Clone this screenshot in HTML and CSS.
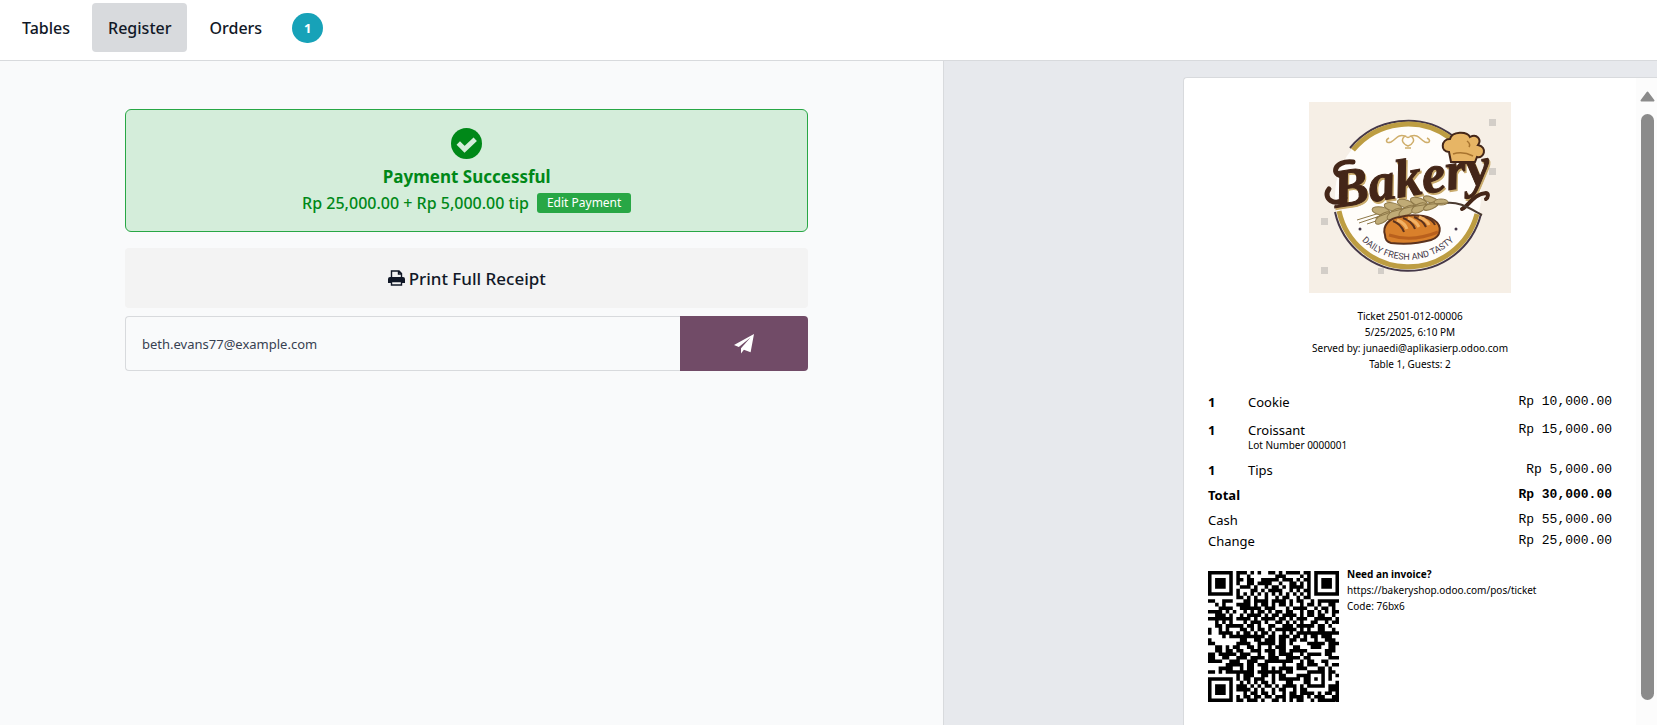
FILE: index.html
```
<!DOCTYPE html>
<html lang="en">
<head>
  <meta charset="UTF-8">
  <meta name="viewport" content="width=device-width, initial-scale=1.0">
  <title>Payment Successful</title>
  <link rel="stylesheet" href="styles.css">
</head>
<body>
  <header class="topbar">
    <nav class="tabs">
      <button type="button" class="tab">Tables</button>
      <button type="button" class="tab active">Register</button>
      <button type="button" class="tab">Orders</button>
    </nav>
    <span class="badge">1</span>
  </header>

  <main class="screen">
    <section class="actions">
      <div class="success">
        <svg class="check" viewBox="0 0 32 32" aria-hidden="true">
          <circle cx="16" cy="16" r="16" fill="#008818"/>
          <path d="M7.500 15.500 L14 22 L25 11.500" fill="none" stroke="#d4edda" stroke-width="5"/>
        </svg>
        <h1>Payment Successful</h1>
        <div class="amount">
          <span>Rp 25,000.00 + Rp 5,000.00 tip</span>
          <button type="button" class="edit">Edit Payment</button>
        </div>
      </div>

      <button type="button" class="print">
        <svg class="printer" viewBox="0 0 17 16" aria-hidden="true">
          <path d="M3.500 8V1h7.500l2.500 2.500V8M10.500 1v3h3" fill="none" stroke="#111827" stroke-width="1.400"/>
          <path d="M2 7h13a2 2 0 0 1 2 2v4h-3v-2H3v2H0V9a2 2 0 0 1 2-2z" fill="#111827"/>
          <path d="M3.500 11.500h10V15h-10z" fill="#f3f3f3" stroke="#111827" stroke-width="1.400"/>
        </svg>
        <span>Print Full Receipt</span>
      </button>

      <form class="send">
        <input type="email" value="beth.evans77@example.com" aria-label="Email">
        <button type="button" aria-label="Send by email">
          <svg class="plane" viewBox="0 0 20 20" aria-hidden="true">
            <path d="M20 0 L0 11 L4.800 13 L16.500 3.500 L7 14.200 L7 19.500 L9.900 15.800 L16.600 18.200 Z" fill="#fff"/>
          </svg>
        </button>
      </form>
    </section>

    <section class="preview">
      <div class="receipt">
        <div class="paper">
          <svg class="logo" viewBox="0 0 202 191" role="img" aria-label="Bakery logo">
            <rect width="202" height="191" fill="#f6efe6"/>
            <g fill="#d3cec8">
              <rect x="180" y="17" width="7" height="7"/>
              <rect x="180" y="66" width="7" height="7"/>
              <rect x="12" y="116" width="7" height="7"/>
              <rect x="12" y="165" width="7" height="7"/>
              <rect x="69" y="166" width="6" height="6"/>
            </g>
            <circle cx="99" cy="94" r="73" fill="#fffdfa"/>
            <!-- ring -->
            <g fill="none">
              <path d="M41 46 A75 75 0 0 1 144 34" stroke="#453848" stroke-width="2"/>
              <path d="M44 48 A71 71 0 0 1 141 36" stroke="#bd9d42" stroke-width="5"/>
              <path d="M26 110 A75 75 0 0 0 172 112" stroke="#453848" stroke-width="2"/>
              <path d="M30 109 A71 71 0 0 0 168 112" stroke="#bd9d42" stroke-width="5"/>
            </g>
            <!-- scroll ornament -->
            <path d="M80 36 C76 38 77 42 82 40 C88 37 88 32 96 34 C91 38 94 42 99 44 C104 42 107 38 102 34 C110 32 110 37 116 40 C121 42 122 38 118 36 M96 34 C99 36 99 36 102 34 M96 46 h6" fill="none" stroke="#cfae6b" stroke-width="1.500"/>
            <!-- lettering, gold shadow under brown -->
            <g transform="rotate(-9 99 80)">
              <text x="24" y="96" class="brand brand-shadow">Bakery</text>
              <text x="23" y="94" class="brand">Bakery</text>
            </g>
            <path d="M44 60 C24 58 22 74 34 74 M36 96 C26 106 13 96 20 87" fill="none" stroke="#442618" stroke-width="5" stroke-linecap="round"/>
            <path d="M153 107 C160 104 164 92 177 91 C180 91 179 96 177 97" fill="none" stroke="#442618" stroke-width="4" stroke-linecap="round"/>
            <!-- chef hat -->
            <path d="M142 60 L140 50 C131 50 132 37 141 37 C143 29 158 29 161 35 C168 31 173 38 169 43 C179 45 175 57 168 55 L166 60 Z" fill="#e7b565" stroke="#442618" stroke-width="2"/>
            <path d="M144 52 C150 50 158 51 164 54 M158 39 q4 3 2 6" fill="none" stroke="#a8742f" stroke-width="1.500"/>
            <!-- wheat -->
            <path d="M136 101 C150 99 160 106 173 113" fill="none" stroke="#4a3a30" stroke-width="2"/>
            <g stroke="#8e7848" stroke-width="1">
              <path d="M74 110 L48 118 M74 113 L50 121 M76 116 L58 122" fill="none"/>
              <g fill="#c0ab76">
                <ellipse cx="72" cy="109" rx="9" ry="4" transform="rotate(10 72 109)"/>
                <ellipse cx="74" cy="116" rx="9" ry="4" transform="rotate(-35 74 116)"/>
                <ellipse cx="84" cy="105" rx="9" ry="4" transform="rotate(14 84 105)"/>
                <ellipse cx="86" cy="112" rx="9" ry="4" transform="rotate(-32 86 112)"/>
                <ellipse cx="97" cy="102" rx="9" ry="4" transform="rotate(18 97 102)"/>
                <ellipse cx="98" cy="109" rx="9" ry="4" transform="rotate(-30 98 109)"/>
                <ellipse cx="110" cy="100" rx="9" ry="4" transform="rotate(20 110 100)"/>
                <ellipse cx="110" cy="106" rx="8" ry="4" transform="rotate(-28 110 106)"/>
                <ellipse cx="122" cy="98" rx="8" ry="3" transform="rotate(20 122 98)"/>
                <ellipse cx="122" cy="104" rx="8" ry="3" transform="rotate(-24 122 104)"/>
                <ellipse cx="132" cy="100" rx="7" ry="3"/>
              </g>
              <path d="M66 116 Q98 102 138 101" fill="none"/>
            </g>
            <!-- bread -->
            <path d="M76 133 C73 124 80 116 91 115 C101 112 118 113 125 118 C134 124 132 135 122 138 C108 142 92 142 82 141 C78 140 76 137 76 133 Z" fill="#d9802b" stroke="#5b321d" stroke-width="2"/>
            <path d="M80 133 C95 138 112 137 129 130" fill="none" stroke="#b9601d" stroke-width="3"/>
            <path d="M84 119 q8 3 11 11 M94 116 q9 3 12 11 M105 115 q9 3 12 10 M116 115 q8 3 10 8" fill="none" stroke="#5b321d" stroke-width="2"/>
            <path d="M88 118 q8 3 10 9 M99 116 q8 3 11 9 M110 115 q8 3 10 8" fill="none" stroke="#f2b163" stroke-width="3"/>
            <circle cx="51" cy="127" r="1.500" fill="#453848"/>
            <circle cx="147" cy="127" r="1.500" fill="#453848"/>
            <path id="motto-path" d="M40 120 A65 65 0 0 0 158 120" fill="none"/>
            <text class="motto"><textPath href="#motto-path" startOffset="50%">DAILY FRESH AND TASTY</textPath></text>
          </svg>

          <div class="ticket">
            <div>Ticket 2501-012-00006</div>
            <div>5/25/2025, 6:10 PM</div>
            <div>Served by: junaedi@aplikasierp.odoo.com</div>
            <div>Table 1, Guests: 2</div>
          </div>

          <table class="lines">
            <tr>
              <td class="qty">1</td>
              <td>Cookie</td>
              <td class="price">Rp 10,000.00</td>
            </tr>
            <tr>
              <td class="qty">1</td>
              <td>Croissant<div class="lot">Lot Number 0000001</div></td>
              <td class="price">Rp 15,000.00</td>
            </tr>
            <tr>
              <td class="qty">1</td>
              <td>Tips</td>
              <td class="price">Rp 5,000.00</td>
            </tr>
          </table>

          <table class="totals">
            <tr class="total">
              <th>Total</th>
              <td class="price">Rp 30,000.00</td>
            </tr>
            <tr>
              <th>Cash</th>
              <td class="price">Rp 55,000.00</td>
            </tr>
            <tr>
              <th>Change</th>
              <td class="price">Rp 25,000.00</td>
            </tr>
          </table>

          <div class="invoice">
            <svg class="qr" id="qr" viewBox="0 0 37 37" role="img" aria-label="Invoice QR code"></svg>
            <div class="invoice-text">
              <strong>Need an invoice?</strong>
              <div>https://bakeryshop.odoo.com/pos/ticket</div>
              <div>Code: 76bx6</div>
            </div>
          </div>
        </div>

        <div class="scrollbar">
          <svg class="arrow" viewBox="0 0 15 11" aria-hidden="true">
            <path d="M7.500 1.500 L13.500 9.500 H1.500 Z" fill="#8b8b8b" stroke="#8b8b8b" stroke-width="2" stroke-linejoin="round"/>
          </svg>
          <div class="thumb"></div>
        </div>
      </div>
    </section>
  </main>

  <script src="script.js"></script>
</body>
</html>
```
FILE: styles.css
```
* {
  box-sizing: border-box;
}
body {
  margin: 0;
  height: 100vh;
  display: flex;
  flex-direction: column;
  overflow: hidden;
  background-color: #fff;
  color: #111827;
  font-family: "Noto Sans", "Open Sans", sans-serif;
  font-size: 14px;
}
button {
  border: 0;
  font-family: inherit;
  color: inherit;
  cursor: pointer;
}

/* top bar */
.topbar {
  display: flex;
  align-items: flex-start;
  padding: 3px 6px 8px;
  border-bottom: 1px solid #d8dadd;
}
.tabs {
  display: flex;
  gap: 6px;
}
.tab {
  height: 49px;
  padding: 0 16px;
  border-radius: 4px;
  background-color: transparent;
  font-size: 16px;
  font-weight: 500;
}
.tab.active {
  background-color: #d8dadd;
}
.badge {
  width: 31px;
  height: 30px;
  margin: 10px 0 0 14px;
  border-radius: 16px;
  background-color: #17a2b8;
  color: #fff;
  font-size: 13px;
  font-weight: 700;
  line-height: 30px;
  text-align: center;
}

/* two panes */
.screen {
  flex: 1;
  min-height: 0;
  display: grid;
  grid-template-columns: 57fr 43fr;
}
.actions {
  display: flex;
  flex-direction: column;
  padding: 48px 135px 0 125px;
  border-right: 1px solid #d8dadd;
  background-color: #f9fafb;
}
.success {
  display: flex;
  flex-direction: column;
  align-items: center;
  padding: 18px 16px 15px;
  border: 1px solid #28a745;
  border-radius: 6px;
  background-color: #d4edda;
  color: #008818;
}
.check {
  width: 31px;
  height: 31px;
  margin-bottom: 4px;
}
.success h1 {
  margin: 0;
  font-size: 17px;
  font-weight: 700;
  line-height: 27px;
}
.amount {
  display: flex;
  align-items: center;
  gap: 8px;
  font-size: 16px;
  font-weight: 500;
  line-height: 26px;
}
.edit {
  height: 20px;
  padding: 0 10px;
  border-radius: 3px;
  background-color: #28a745;
  color: #fff;
  font-size: 12px;
  line-height: 20px;
}
.print {
  display: flex;
  align-items: center;
  justify-content: center;
  gap: 4px;
  height: 60px;
  margin-top: 16px;
  border-radius: 4px;
  background-color: #f3f3f3;
  font-size: 17px;
  font-weight: 500;
}
.printer {
  width: 17px;
  height: 16px;
}
.send {
  display: flex;
  height: 55px;
  margin-top: 8px;
}
.send input {
  flex: 1;
  padding: 0 16px;
  border: 1px solid #d8dadd;
  border-right: 0;
  border-radius: 4px 0 0 4px;
  background-color: transparent;
  color: #374151;
  font-family: inherit;
  font-size: 13px;
}
.send button {
  width: 128px;
  border-radius: 0 4px 4px 0;
  background-color: #714b67;
}
.plane {
  width: 20px;
  height: 20px;
  vertical-align: middle;
}

/* receipt */
.preview {
  display: flex;
  justify-content: flex-end;
  padding-top: 16px;
  background-color: #e7e9ed;
  min-height: 0;
}
.receipt {
  display: flex;
  width: 100%;
  max-width: 474px;
  border: 1px solid #d8dadd;
  border-width: 1px 0 0 1px;
  border-radius: 4px 0 0 0;
  background-color: #fff;
  color: #000;
}
.paper {
  flex: 1;
  padding: 24px;
}
.logo {
  display: block;
  width: 202px;
  height: 191px;
  margin: 0 auto;
}
.brand {
  font-family: "Liberation Serif", serif;
  font-size: 54px;
  font-style: italic;
  font-weight: 700;
  fill: #442618;
  stroke: #442618;
  stroke-width: 1px;
}
.brand-shadow {
  fill: #c9ab6c;
  stroke: #c9ab6c;
}
.motto {
  font-family: Roboto, sans-serif;
  font-size: 9px;
  text-anchor: middle;
  fill: #453848;
}
.ticket {
  margin-top: 15px;
  font-size: 10px;
  line-height: 16px;
  text-align: center;
}
.lines,
.totals {
  width: 100%;
  border-collapse: collapse;
  font-size: 13px;
  line-height: 18px;
}
.lines {
  margin-top: 16px;
}
.lines td {
  padding: 5px 0;
  vertical-align: top;
}
.lines .qty {
  width: 40px;
  font-weight: 700;
}
.lot {
  font-size: 10px;
  line-height: 12px;
}
.price {
  font-family: "Liberation Mono", monospace;
  text-align: right;
}
.totals th,
.totals td {
  padding: 0 0 3px;
}
.totals th {
  font-weight: 400;
  text-align: left;
}
.totals .total th,
.totals .total td {
  padding: 2px 0 7px;
  font-weight: 700;
}
.invoice {
  display: flex;
  gap: 8px;
  margin-top: 18px;
}
.qr {
  width: 131px;
  height: 131px;
}
.invoice-text {
  margin-top: -5px;
  font-size: 10px;
  line-height: 16px;
}
.scrollbar {
  display: flex;
  flex-direction: column;
  align-items: center;
  gap: 12px;
  width: 21px;
  padding: 13px 3px 25px 5px;
  background-color: #fcfcfc;
}
.arrow {
  width: 15px;
  height: 11px;
}
.thumb {
  flex: 1;
  width: 13px;
  border-radius: 7px;
  background-color: #8b8b8b;
}
```
FILE: script.js
```
// one string per row, 1 = dark module
const rows = [
  '1111111011101010011010111101101111111',
  '1000001010010000000111000010101000001',
  '1011101011011001111101110101101011101',
  '1011101010011011110010011010101011101',
  '1011101001110100101101011110101011101',
  '1000001010001101011110010101101000001',
  '1111111010101010101010101010101111111',
  '0000000011010100100101100101100000000',
  '1100111000110111101111010110010111111',
  '0010100011110101101011010010110100110',
  '0001111001111110111000101111001011010',
  '1111010100101011010110110010110101011',
  '0011101001011110101101111010110110010',
  '1111111011110101111011010111001111101',
  '0010101000101110100110101010011001011',
  '0011011111011010011001110111110110100',
  '1001010001101011010111111010100110010',
  '1001111010110101101001010111111111111',
  '0000101111111111011011101101011011100',
  '1000000001100110111011011011001001110',
  '1100000011110011111011010000111110111',
  '0011010110011010010111001100011100110',
  '0011011011001110111011011111000001110',
  '1101111101110010011011110010111101100',
  '1100110011101111011100111101100000111',
  '1111001110011100111111110010110011000',
  '0000011111011011100001000110111001011',
  '0001111001011001101011110111000110100',
  '1101011111111011111110110000111110110',
  '0000000010111001101011000111100010101',
  '1111111010110111001011111101101010100',
  '1000001001010101101000110001100010001',
  '1011101011101010110101111010111110111',
  '1011101011110101001011001011000000111',
  '1011101000101101101001011011110101101',
  '1000001010110110110111011110101110011',
  '1111111011011101001101010110010111111'
];

const qr = document.getElementById('qr');
const path = document.createElementNS('http://www.w3.org/2000/svg', 'path');
let d = '';
rows.forEach((row, y) => {
  [...row].forEach((bit, x) => {
    if (bit === '1') d += `M${x} ${y}h1v1h-1z`;
  });
});
path.setAttribute('d', d);
qr.appendChild(path);
```
